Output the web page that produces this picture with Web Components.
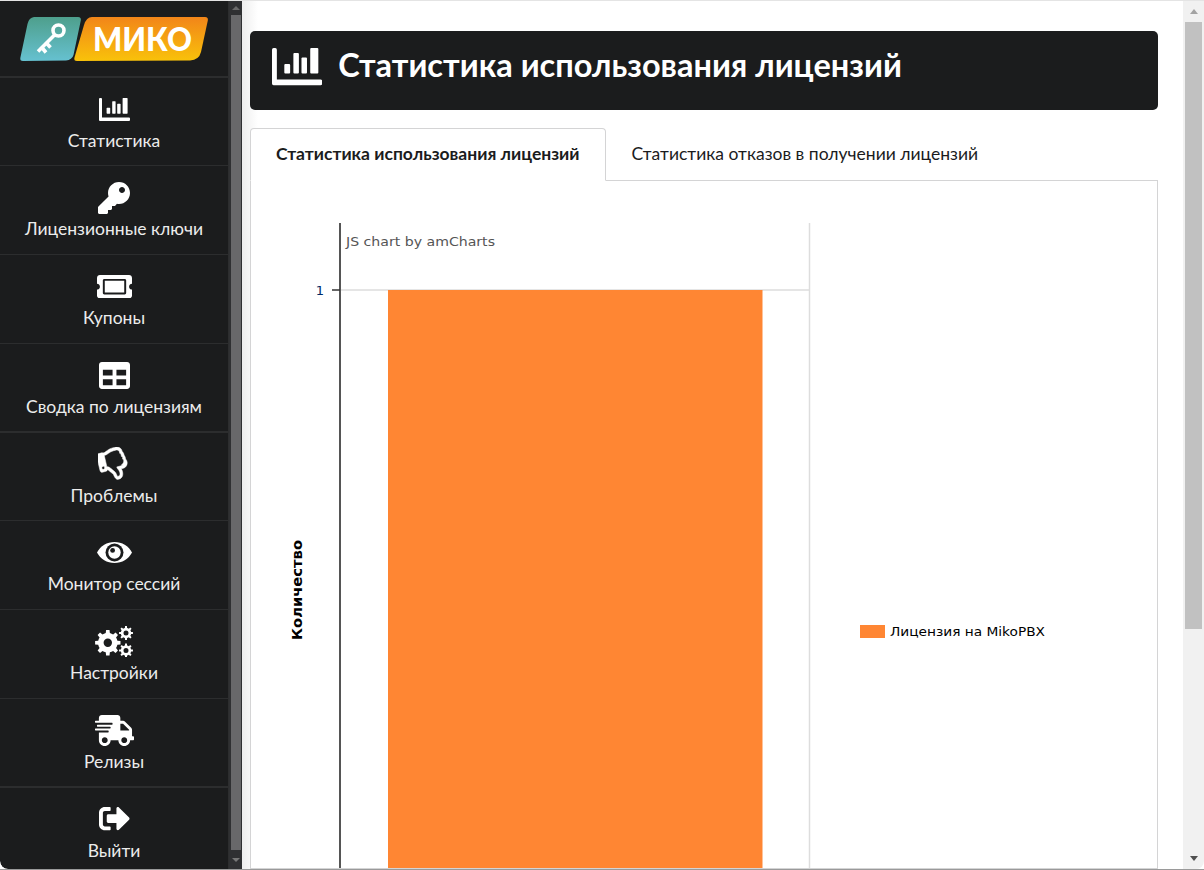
<!DOCTYPE html>
<html lang="ru">
<head>
<meta charset="utf-8">
<title>Статистика</title>
<style>
html,body{margin:0;padding:0;height:100%;overflow:hidden;background:#fff}
body{font-family:"Lato","Noto Sans",sans-serif;box-sizing:border-box;border-top:1px solid #e4e4e4;border-bottom:1px solid #9a9a9a}
</style>
</head>
<body>
<mk-app>
  <mk-sidebar slot="side">
    <mk-logo></mk-logo>
    <mk-nav-item icon="bars">Статистика</mk-nav-item>
    <mk-nav-item icon="key">Лицензионные ключи</mk-nav-item>
    <mk-nav-item icon="ticket">Купоны</mk-nav-item>
    <mk-nav-item icon="table" thick>Сводка по лицензиям</mk-nav-item>
    <mk-nav-item icon="thumb">Проблемы</mk-nav-item>
    <mk-nav-item icon="eye">Монитор сессий</mk-nav-item>
    <mk-nav-item icon="cogs">Настройки</mk-nav-item>
    <mk-nav-item icon="truck" thick>Релизы</mk-nav-item>
    <mk-nav-item icon="exit">Выйти</mk-nav-item>
  </mk-sidebar>
  <mk-scrollbar slot="sidebar-scroll" theme="dark"></mk-scrollbar>
  <mk-header slot="main">Статистика использования лицензий</mk-header>
  <mk-tabs slot="main">
    <mk-tab active>Статистика использования лицензий</mk-tab>
    <mk-tab>Статистика отказов в получении лицензий</mk-tab>
  </mk-tabs>
  <mk-panel slot="main"><mk-chart></mk-chart></mk-panel>
  <mk-scrollbar slot="main-scroll" theme="light"></mk-scrollbar>
</mk-app>
<script>
const gear=(cx,cy,R,r,n,hole)=>{
  let d='';
  const step=Math.PI*2/n;
  for(let i=0;i<n;i++){
    const a=i*step;
    const pts=[[r,a-step*.5],[r,a-step*.27],[R,a-step*.17],[R,a+step*.17],[r,a+step*.27]];
    pts.forEach((p,j)=>{d+=((i===0&&j===0)?'M':'L')+(cx+p[0]*Math.cos(p[1])).toFixed(2)+' '+(cy+p[0]*Math.sin(p[1])).toFixed(2)});
  }
  d+='Z';
  d+=`M${cx-hole} ${cy}a${hole} ${hole} 0 1 0 ${hole*2} 0a${hole} ${hole} 0 1 0 ${-hole*2} 0Z`;
  return d;
};
const ICONS={
  bars:{w:31,h:23,vb:'0 0 31 22',svg:`<path d="M0 1a1 1 0 0 1 1-1h1a1 1 0 0 1 1 1v17.6h27a1 1 0 0 1 1 1V21a1 1 0 0 1-1 1H1a1 1 0 0 1-1-1Z"/><rect x="7.6" y="9.4" width="3.6" height="5.6" rx=".6"/><rect x="13.2" y="3" width="3.4" height="12" rx=".6"/><rect x="18.2" y="5.6" width="3.4" height="9.4" rx=".6"/><rect x="23.6" y="0" width="5" height="15" rx=".6"/>`},
  key:{w:32,h:32,vb:'0 0 512 512',svg:`<path d="M512 176.001C512 273.203 433.202 352 336 352c-11.22 0-22.19-1.062-32.827-3.069l-24.012 27.014A23.999 23.999 0 0 1 261.223 384H224v40c0 13.255-10.745 24-24 24h-40v40c0 13.255-10.745 24-24 24H24c-13.255 0-24-10.745-24-24v-78.059c0-6.365 2.529-12.47 7.029-16.971l161.802-161.802C163.108 213.814 160 195.271 160 176 160 78.798 238.797.001 335.999 0 433.488-.001 512 78.511 512 176.001zM336 128c0 26.51 21.49 48 48 48s48-21.49 48-48-21.49-48-48-48-48 21.49-48 48z" fill-rule="evenodd"/>`},
  ticket:{w:35,h:23.4,vb:'0 64 576 384',svg:`<path d="M128 160h320v192H128V160zm400 96c0 26.51 21.49 48 48 48v96c0 26.51-21.49 48-48 48H48c-26.51 0-48-21.49-48-48v-96c26.51 0 48-21.49 48-48s-21.49-48-48-48v-96c0-26.51 21.49-48 48-48h480c26.51 0 48 21.49 48 48v96c-26.51 0-48 21.49-48 48zm-48-104c0-13.255-10.745-24-24-24H120c-13.255 0-24 10.745-24 24v208c0 13.255 10.745 24 24 24h336c13.255 0 24-10.745 24-24V152z"/>`},
  table:{w:31,h:27,vb:'0 32 512 448',svg:`<path d="M464 32H48C21.49 32 0 53.49 0 80v352c0 26.51 21.49 48 48 48h416c26.51 0 48-21.49 48-48V80c0-26.51-21.49-48-48-48zM224 416H64v-96h160v96zm0-160H64v-96h160v96zm224 160H288v-96h160v96zm0-160H288v-96h160v96z"/>`},
  thumb:{w:32,h:34,vb:'-16 -16 544 544',svg:`<g transform="rotate(-14 256 256)"><path fill-rule="evenodd" stroke="#fff" stroke-width="8" d="M466.27 225.31c4.674-22.647.864-44.538-8.99-62.99 2.958-23.868-4.021-48.565-17.34-66.99C438.986 39.423 404.117 0 327 0c-7 0-15 .01-22.22.01C201.195.01 168.997 40 128 40h-10.845c-5.64-4.975-13.042-8-21.155-8H32C14.327 32 0 46.327 0 64v240c0 17.673 14.327 32 32 32h64c11.842 0 22.175-6.438 27.708-16h7.052c19.146 16.953 46.013 60.653 68.76 83.4 13.667 13.667 10.153 108.6 71.76 108.6 57.58 0 95.27-31.936 95.27-104.73 0-18.41-3.93-33.73-8.85-46.54h36.48c48.602 0 85.82-41.565 85.82-85.58 0-19.15-4.96-34.99-13.73-49.84zM64 296c-13.255 0-24-10.745-24-24s10.745-24 24-24 24 10.745 24 24-10.745 24-24 24zm330.18 16.73H290.19c0 37.82 28.36 55.37 28.36 94.54 0 23.75 0 56.73-47.27 56.73-18.91-18.91-9.46-66.18-37.82-94.54C206.9 342.89 167.28 272 138.92 272H128V85.83c53.611 0 100.001-37.82 171.64-37.82h37.82c35.512 0 60.82 17.12 53.85 65.9 14.32 7.68 24.97 35.26 13.17 50.26 19.11 5.16 26.6 33.31 11.16 49.29 23.2 3.97 24 66.5-42.2 89.27z"/></g>`},
  eye:{w:35,h:21,vb:'0 0 35 21',svg:`<path d="M0 10.5C3.5 4 10 0 17.5 0S31.5 4 35 10.5C31.5 17 25 21 17.5 21S3.5 17 0 10.5Z"/><circle cx="17.5" cy="10.5" r="9" fill="#1b1c1d"/><circle cx="17.5" cy="10.5" r="6.2" fill="#fff"/><circle cx="15.6" cy="8.4" r="2.4" fill="#1b1c1d"/>`},
  cogs:{w:38,h:31,vb:'0 0 38 31',svg:`<path fill-rule="evenodd" d="${gear(12.8,16.7,12.8,9.8,8,4.2)}"/><path fill-rule="evenodd" d="${gear(31,7,7,5.2,8,2.5)}"/><path fill-rule="evenodd" d="${gear(31,24.5,7,5.2,8,2.5)}"/>`},
  truck:{w:39,h:31,vb:'0 0 640 512',svg:`<path d="M624 352h-16V243.9c0-12.7-5.1-24.9-14.1-33.9L494 110.1c-9-9-21.2-14.1-33.9-14.1H416V48c0-26.5-21.5-48-48-48H112C85.5 0 64 21.5 64 48v48H8c-4.4 0-8 3.6-8 8v16c0 4.4 3.6 8 8 8h272c4.4 0 8 3.6 8 8v16c0 4.4-3.6 8-8 8H40c-4.4 0-8 3.6-8 8v16c0 4.4 3.6 8 8 8h208c4.4 0 8 3.6 8 8v16c0 4.4-3.6 8-8 8H8c-4.4 0-8 3.6-8 8v16c0 4.4 3.6 8 8 8h208c4.4 0 8 3.6 8 8v16c0 4.4-3.6 8-8 8H64v128c0 53 43 96 96 96s96-43 96-96h128c0 53 43 96 96 96s96-43 96-96h48c8.8 0 16-7.2 16-16v-32c0-8.8-7.2-16-16-16zM160 464c-26.5 0-48-21.5-48-48s21.5-48 48-48 48 21.5 48 48-21.5 48-48 48zm320 0c-26.5 0-48-21.5-48-48s21.5-48 48-48 48 21.5 48 48-21.5 48-48 48zm80-208H416V144h44.1l99.9 99.9V256z"/>`},
  exit:{w:31,h:23.3,vb:'0 64 512 384',svg:`<path d="M180 448H96c-53 0-96-43-96-96V160c0-53 43-96 96-96h84c6.6 0 12 5.4 12 12v40c0 6.6-5.4 12-12 12H96c-17.7 0-32 14.3-32 32v192c0 17.7 14.3 32 32 32h84c6.6 0 12 5.4 12 12v40c0 6.6-5.4 12-12 12z"/><path d="M497 273L329 441c-15 15-41 4.5-41-17v-96H152c-13.3 0-24-10.7-24-24v-96c0-13.3 10.7-24 24-24h136V88c0-21.4 25.9-32 41-17l168 168c9.3 9.4 9.3 24.6 0 34z"/>`}
};
const iconSvg=(name,scale=1)=>{
  const i=ICONS[name];
  return `<svg xmlns="http://www.w3.org/2000/svg" width="${i.w*scale}" height="${i.h*scale}" viewBox="${i.vb}" preserveAspectRatio="none" fill="#fff" style="display:block">${i.svg}</svg>`;
};
class Base extends HTMLElement{
  constructor(){super();this.attachShadow({mode:'open'});}
}
customElements.define('mk-app',class extends Base{
  constructor(){super();this.shadowRoot.innerHTML=`<style>
    :host{display:flex;height:100%;overflow:hidden;border-radius:0 0 8px 8px;background:#fff}
    .side{flex:0 0 228px;background:#1b1c1d;overflow:hidden;border-right:1px solid #2c2d2e;box-sizing:content-box;border-bottom-left-radius:8px}
    .sb{flex:0 0 13px;display:flex}
    .main{flex:1;min-width:0;padding:30px 25px 0 8px;background:linear-gradient(90deg,#eeeeee,#ffffff 16px);display:flex;flex-direction:column;overflow:hidden}
    .msb{flex:0 0 21px;display:flex}
  </style>
  <div class="side"><slot name="side"></slot></div>
  <div class="sb"><slot name="sidebar-scroll"></slot></div>
  <div class="main"><slot name="main"></slot></div>
  <div class="msb"><slot name="main-scroll"></slot></div>`;}
});
customElements.define('mk-sidebar',class extends Base{
  constructor(){super();this.shadowRoot.innerHTML=`<style>:host{display:block}</style><slot></slot>`;}
});
customElements.define('mk-logo',class extends Base{
  constructor(){super();this.shadowRoot.innerHTML=`<style>
    :host{display:block;height:76.5px;box-sizing:border-box;border-bottom:2px solid #2c2d2e;overflow:hidden}
    svg{display:block}
    text{font-family:"Lato","Noto Sans",sans-serif;font-weight:900}
  </style>
  <svg width="228" height="75" viewBox="0 1 228 75">
    <defs>
      <linearGradient id="t" x1="0" y1="0" x2="0" y2="1"><stop offset="0" stop-color="#4e9f8c"/><stop offset="1" stop-color="#66c1d0"/></linearGradient>
      <linearGradient id="o" x1="0" y1="0" x2="0" y2="1"><stop offset="0" stop-color="#f28519"/><stop offset="1" stop-color="#f9c20a"/></linearGradient>
    </defs>
    <path d="M34 17H78Q81.500 17 80.800 20.500L73.500 55Q72 60 66 60.400L23 61Q19.600 61 20.400 57.500L27.500 24Q29 17.500 34 17Z" fill="url(#t)"/>
    <path d="M92 17H205Q208.500 17 207.800 20.500L201 52Q199 60 190 60.400L77 61Q73.500 61 74.500 57.500L84 25Q86.500 17 92 17Z" fill="url(#o)"/>
    <g fill="none" stroke="#fff" stroke-width="3.600" stroke-linecap="butt">
      <circle cx="58.500" cy="30.500" r="5.500"/>
      <path d="M54.500 35L38 51.500"/>
      <path d="M41 46.500L46 52.500M45.500 42L50.500 47.500"/>
    </g>
    <text x="93" y="51" font-size="33" fill="#fff" textLength="99" lengthAdjust="spacingAndGlyphs">МИКО</text>
  </svg>`;}
});
customElements.define('mk-icon',class extends Base{
  connectedCallback(){
    const s=parseFloat(this.getAttribute('scale')||'1');
    this.shadowRoot.innerHTML=`<style>:host{display:block}</style>`+iconSvg(this.getAttribute('name'),s);
  }
});
customElements.define('mk-nav-item',class extends Base{
  connectedCallback(){
    const thick=this.hasAttribute('thick');
    this.shadowRoot.innerHTML=`<style>
      :host{display:block;height:88.75px;box-sizing:border-box;border-bottom:${thick?2:1}px solid #2c2d2e}
      .w{height:100%;display:flex;flex-direction:column;align-items:center;color:#ececec;font-size:17.5px;line-height:20px}
      .i{height:43px;display:flex;align-items:center;justify-content:center;margin-top:10px}
      .l{white-space:nowrap}
    </style><div class="w"><div class="i"><mk-icon name="${this.getAttribute('icon')}"></mk-icon></div><div class="l"><slot></slot></div></div>`;
  }
});
customElements.define('mk-scrollbar',class extends Base{
  connectedCallback(){
    const dark=this.getAttribute('theme')==='dark';
    this.shadowRoot.innerHTML=dark?`<style>
      :host{display:flex;flex-direction:column;width:100%;background:#2f3032;align-items:center}
      .a{height:14px;display:flex;align-items:center;justify-content:center;flex:none}
      .t{width:10px;flex:0 0 835px;background:#68686a}
      .s{flex:1}
      i{width:0;height:0;border-left:4px solid transparent;border-right:4px solid transparent}
      .u{border-bottom:4px solid #6a6a6a}.d{border-top:4px solid #777}
    </style><div class="a"><i class="u"></i></div><div class="t"></div><div class="s"></div><div class="a" style="height:18px"><i class="d"></i></div>`
    :`<style>
      :host{display:flex;flex-direction:column;width:100%;background:#f1f1f1;box-sizing:border-box;padding:0 2px;align-items:center}
      .a{height:21px;display:flex;align-items:center;justify-content:center;flex:none}
      .t{width:17px;flex:0 0 607px;background:#c1c1c1}
      .s{flex:1}
      i{width:0;height:0;border-left:4.500px solid transparent;border-right:4.500px solid transparent}
      .u{border-bottom:5px solid #a3a3a3}.d{border-top:5px solid #505050}
    </style><div class="a"><i class="u"></i></div><div class="t"></div><div class="s"></div><div class="a"><i class="d"></i></div>`;
  }
});
customElements.define('mk-header',class extends Base{
  connectedCallback(){
    this.shadowRoot.innerHTML=`<style>
      :host{display:flex;flex:none;align-items:center;height:79px;background:#1b1c1d;border-radius:5px;padding:0 0 7px 22px;color:#fff;font-size:32.5px;font-weight:700;gap:16px;box-sizing:border-box;white-space:nowrap}
      span{margin-bottom:5px}
    </style><mk-icon name="bars" scale="1.62"></mk-icon><span><slot></slot></span>`;
  }
});
customElements.define('mk-tabs',class extends Base{
  constructor(){super();this.shadowRoot.innerHTML=`<style>
    :host{display:flex;flex:none;margin-top:18px;height:53px;position:relative;z-index:1}
    .line{flex:1;border-bottom:1px solid #d4d4d5}
  </style><slot></slot><div class="line"></div>`;}
});
customElements.define('mk-tab',class extends Base{
  connectedCallback(){
    const a=this.hasAttribute('active');
    this.shadowRoot.innerHTML=`<style>
      :host{display:flex;align-items:center;box-sizing:border-box;height:53px;padding:0 25px 2px;font-size:17.5px;color:#1b1c1d;white-space:nowrap;
      ${a?'font-weight:700;background:#fff;border:1px solid #d4d4d5;border-bottom:1px solid #fff;border-radius:4px 4px 0 0;':'padding-left:26px;border-bottom:1px solid #d4d4d5;'}}
    </style><slot></slot>`;
  }
});
customElements.define('mk-panel',class extends Base{
  constructor(){super();this.shadowRoot.innerHTML=`<style>
    :host{display:block;flex:1;min-height:0;border:1px solid #d4d4d5;border-top:0;background:#fff;overflow:hidden}
  </style><slot></slot>`;}
});
customElements.define('mk-chart',class extends Base{
  constructor(){super();this.shadowRoot.innerHTML=`<style>
    :host{display:block}
    svg{display:block}
    text{font-family:"DejaVu Sans",Verdana,sans-serif;font-size:13px}
  </style>
  <svg width="907" height="690" viewBox="251 181 907 690">
    <line x1="340" y1="290" x2="810" y2="290" stroke="#ddd" stroke-width="1.500"/>
    <line x1="809.500" y1="223" x2="809.500" y2="871" stroke="#ddd" stroke-width="1.500"/>
    <rect x="388" y="290" width="374.500" height="581" fill="#ff8633"/>
    <line x1="340" y1="223" x2="340" y2="871" stroke="#555" stroke-width="2"/>
    <line x1="332" y1="290" x2="340" y2="290" stroke="#333" stroke-width="1.500"/>
    <text x="346" y="246" fill="#555" textLength="149" lengthAdjust="spacingAndGlyphs">JS chart by amCharts</text>
    <text x="324" y="295" fill="#002a66" text-anchor="end">1</text>
    <text transform="translate(301.500 640) rotate(-90)" style="font-weight:700;font-size:14px" textLength="100" lengthAdjust="spacingAndGlyphs" fill="#000">Количество</text>
    <rect x="860" y="625" width="25" height="13" fill="#ff8633"/>
    <text x="890" y="636" fill="#000" textLength="155" lengthAdjust="spacingAndGlyphs">Лицензия на MikoPBX</text>
  </svg>`;}
});
</script>
</body>
</html>
